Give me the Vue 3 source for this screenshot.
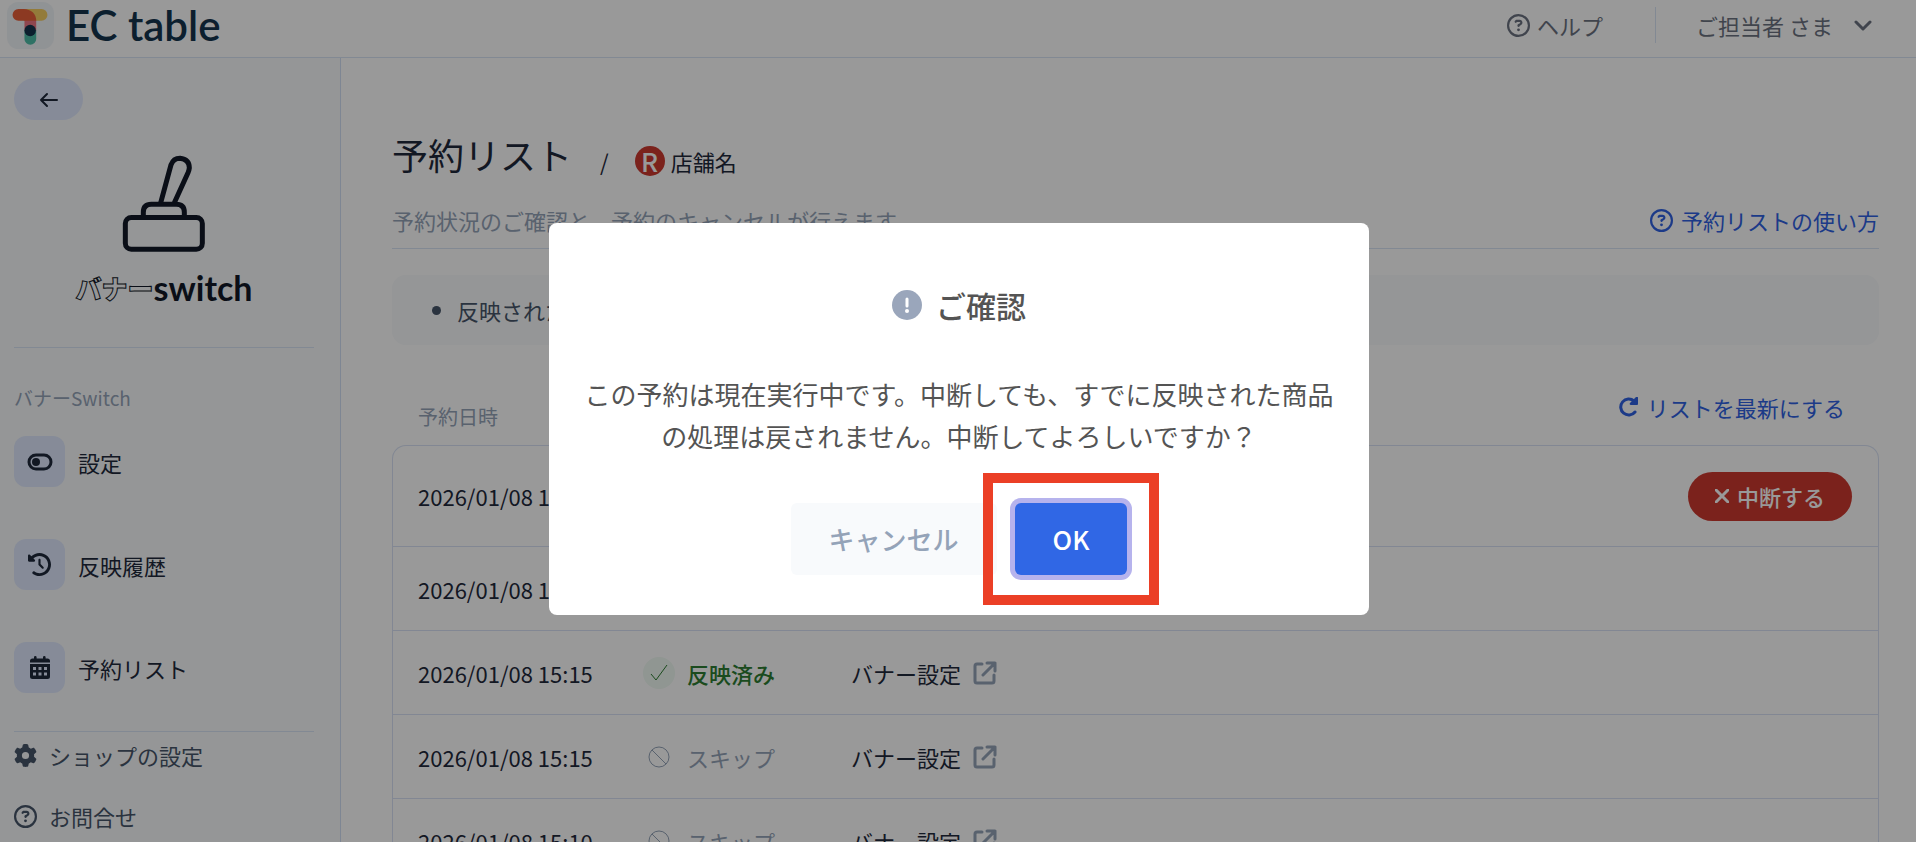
<template>
  <div class="app">
    <header class="header">
      <a href="#" class="brand">
        <svg class="brand-mark" viewBox="0 0 140 140" aria-hidden="true">
          <rect width="140" height="140" rx="34" fill="#f1f5f9" />
          <path d="M50 21H103a17.500 17.500 0 0 1 0 35H50z" fill="#f5cd62" />
          <path d="M52 52H87V86H52z" fill="#ee7584" />
          <path d="M52 84H87V110a17.500 17.500 0 0 1-35 0z" fill="#4fbfa8" />
          <path d="M34 21H50C72 21 87 36 87 56H34a17.500 17.500 0 0 1 0-35z" fill="#ea5f3a" />
          <circle cx="69" cy="85" r="17" fill="#14344d" />
        </svg>
        <span class="brand-name">EC table</span>
      </a>
      <div class="header-menu">
        <a href="#" class="help">
          <svg class="icon" viewBox="0 0 512 512" aria-hidden="true"><path :d="icons.question" /></svg>
          <span>ヘルプ</span>
        </a>
        <button type="button" class="account">
          <span>ご担当者 さま</span>
          <svg class="chevron" viewBox="0 0 18 18" aria-hidden="true"><path d="M2 6l7 7 7-7" /></svg>
        </button>
      </div>
    </header>

    <div class="layout">
      <aside class="sidebar">
        <button type="button" class="back" aria-label="戻る">
          <svg viewBox="0 0 20 18" aria-hidden="true"><path d="M18 10H2M8 4L2 10l6 6" /></svg>
        </button>

        <div class="product">
          <svg class="stamp" viewBox="366 462 252 296" aria-hidden="true">
            <rect x="376" y="652" width="231" height="95" rx="18" />
            <path d="M430 650V636Q430 612 454 612H529Q553 612 553 636V650" />
            <path d="M482 608L513 494Q520 474 540 474Q568 477 568 503Q567 511 564 518L523 608" />
          </svg>
          <div class="product-name"><span class="outlined">バナー</span><span>switch</span></div>
        </div>

        <nav class="menu">
          <p class="menu-title">バナーSwitch</p>
          <a v-for="item in menu" :key="item.label" href="#" class="menu-item">
            <span class="menu-icon">
              <svg v-if="item.icon === 'toggle'" width="26" height="18" viewBox="0 0 26 18" aria-hidden="true">
                <rect x="2" y="2" width="22" height="14" rx="7" fill="none" stroke="currentColor" stroke-width="3" />
                <circle cx="9" cy="9" r="4" />
              </svg>
              <svg v-else-if="item.icon === 'history'" width="23" height="23" viewBox="0 0 512 512" aria-hidden="true">
                <path :d="icons.history" />
              </svg>
              <svg v-else width="20" height="23" viewBox="0 0 20 23" aria-hidden="true">
                <path fill-rule="evenodd" d="M0 6V5Q0 2.500 2.500 2.500H4V1.300a1.300 1.300 0 0 1 2.600 0V2.500H13V1.300a1.300 1.300 0 0 1 2.600 0V2.500H17.500Q20 2.500 20 5V6.500H0zM0 8H20V20.500Q20 23 17.500 23H2.500Q0 23 0 20.500zM3 11v3h3v-3zM8.500 11v3h3v-3zM14 11v3h3v-3zM3 16.500v3h3v-3zM8.500 16.500v3h3v-3zM14 16.500v3h3v-3z" />
              </svg>
            </span>
            <span>{{ item.label }}</span>
          </a>
        </nav>

        <nav class="submenu">
          <a href="#">
            <svg class="icon" viewBox="0 0 512 512" aria-hidden="true"><path :d="icons.gear" /></svg>
            <span>ショップの設定</span>
          </a>
          <a href="#">
            <svg class="icon" viewBox="0 0 512 512" aria-hidden="true"><path :d="icons.question" /></svg>
            <span>お問合せ</span>
          </a>
        </nav>
      </aside>

      <main class="main">
        <div class="page-title">
          <h1>予約リスト</h1>
          <span class="slash">/</span>
          <span class="shop"><span class="shop-mark">R</span>店舗名</span>
        </div>
        <div class="lead">
          <p>予約状況のご確認と、予約のキャンセルが行えます。</p>
          <a href="#">
            <svg class="icon" viewBox="0 0 512 512" aria-hidden="true"><path :d="icons.question" /></svg>
            <span>予約リストの使い方</span>
          </a>
        </div>
        <ul class="notice">
          <li>反映された</li>
        </ul>

        <table class="list">
          <thead>
            <tr>
              <th class="col-date">予約日時</th>
              <th class="col-status"></th>
              <th class="col-target"></th>
              <th class="col-action">
                <button type="button" class="refresh">
                  <svg width="20" height="20" viewBox="0 0 20 20" aria-hidden="true">
                    <path d="M16 15A8 8 0 1 1 15 4" fill="none" stroke="currentColor" stroke-width="3" stroke-linecap="round" />
                    <path d="M19 1V7Q19 8 18 8H12Q10 8 11 6L17 0Q19-1 19 1z" />
                  </svg>
                  <span>リストを最新にする</span>
                </button>
              </th>
            </tr>
          </thead>
          <tbody>
            <tr v-for="row in rows" :key="row.id">
              <td>{{ row.date }}</td>
              <td>
                <span v-if="row.status" class="status" :class="row.status">
                  <span class="status-icon">
                    <svg v-if="row.status === 'done'" viewBox="0 0 20 20" aria-hidden="true"><path d="M2 11l5 6L18 2" /></svg>
                    <svg v-else viewBox="0 0 22 22" aria-hidden="true"><circle cx="11" cy="11" r="10" /><path d="M4 4l14 14" /></svg>
                  </span>
                  <span>{{ row.status === 'done' ? '反映済み' : 'スキップ' }}</span>
                </span>
              </td>
              <td>
                <a v-if="row.target" href="#" class="target">
                  <span>{{ row.target }}</span>
                  <svg viewBox="0 0 24 24" aria-hidden="true">
                    <path d="M9 3H4Q2 3 2 5V20Q2 22 4 22H19Q21 22 21 20V14M14 2H22V10M22 2L10 14" />
                  </svg>
                </a>
              </td>
              <td class="col-action">
                <button v-if="row.running" type="button" class="abort" @click="showModal = true">
                  <svg viewBox="0 0 14 14" aria-hidden="true"><path d="M1 1l12 12M13 1L1 13" /></svg>
                  <span>中断する</span>
                </button>
              </td>
            </tr>
          </tbody>
        </table>
      </main>
    </div>

    <div v-if="showModal" class="modal-overlay" @click="closeModal">
      <div class="modal" role="dialog" aria-labelledby="modal-title" @click.stop>
        <h2 id="modal-title" class="modal-title">
          <svg viewBox="0 0 30 30" aria-hidden="true">
            <circle cx="15" cy="15" r="15" fill="#9aa6bb" />
            <path d="M15 9V16" stroke="#fff" stroke-width="3" stroke-linecap="round" />
            <circle cx="15" cy="21" r="2" fill="#fff" />
          </svg>
          <span>ご確認</span>
        </h2>
        <p class="modal-text">この予約は現在実行中です。中断しても、すでに反映された商品の処理は戻されません。中断してよろしいですか？</p>
        <div class="modal-actions">
          <button type="button" class="btn cancel" @click="closeModal">キャンセル</button>
          <div class="marked">
            <button type="button" class="btn ok" @click="closeModal">OK</button>
          </div>
        </div>
      </div>
    </div>
  </div>
</template>

<script setup>
import { ref } from 'vue'

const showModal = ref(true)

const menu = [
  { label: '設定', icon: 'toggle' },
  { label: '反映履歴', icon: 'history' },
  { label: '予約リスト', icon: 'calendar' }
]

const rows = [
  { id: 1, date: '2026/01/08 15:15', running: true },
  { id: 2, date: '2026/01/08 15:15' },
  { id: 3, date: '2026/01/08 15:15', status: 'done', target: 'バナー設定' },
  { id: 4, date: '2026/01/08 15:15', status: 'skip', target: 'バナー設定' },
  { id: 5, date: '2026/01/08 15:10', status: 'skip', target: 'バナー設定' }
]

const icons = {
  question:
    'M464 256A208 208 0 1 0 48 256a208 208 0 1 0 416 0zM0 256a256 256 0 1 1 512 0A256 256 0 1 1 0 256zm169.8-90.7c7.9-22.3 29.1-37.3 52.8-37.3l58.3 0c34.9 0 63.1 28.3 63.1 63.1c0 22.6-12.1 43.5-31.7 54.8L280 264.4c-.2 13-10.9 23.6-24 23.6c-13.3 0-24-10.7-24-24l0-13.5c0-8.6 4.6-16.5 12.1-20.8l44.3-25.4c4.7-2.7 7.6-7.7 7.6-13.1c0-8.4-6.8-15.1-15.1-15.1l-58.3 0c-3.4 0-6.4 2.1-7.5 5.3l-.4 1.2c-4.4 12.5-18.2 19-30.6 14.6s-19-18.2-14.6-30.6l.4-1.2zM224 352a32 32 0 1 1 64 0 32 32 0 1 1 -64 0z',
  gear:
    'M495.9 166.6c3.2 8.7 .5 18.4-6.4 24.6l-43.3 39.4c1.1 8.3 1.7 16.8 1.7 25.4s-.6 17.1-1.7 25.4l43.3 39.4c6.9 6.2 9.6 15.9 6.4 24.6c-4.4 11.9-9.7 23.3-15.8 34.3l-4.7 8.1c-6.6 11-14 21.4-22.1 31.2c-5.9 7.2-15.7 9.6-24.5 6.8l-55.7-17.7c-13.4 10.3-28.2 18.9-44 25.4l-12.5 57.1c-2 9.1-9 16.3-18.2 17.8c-13.8 2.3-28 3.5-42.5 3.5s-28.7-1.2-42.5-3.5c-9.2-1.5-16.2-8.7-18.2-17.8l-12.5-57.1c-15.8-6.5-30.6-15.1-44-25.4L83.1 425.9c-8.8 2.8-18.6 .3-24.5-6.8c-8.1-9.8-15.5-20.2-22.1-31.2l-4.7-8.1c-6.1-11-11.4-22.4-15.8-34.3c-3.2-8.7-.5-18.4 6.4-24.6l43.3-39.4C64.6 273.1 64 264.6 64 256s.6-17.1 1.7-25.4L22.4 191.2c-6.9-6.2-9.6-15.9-6.4-24.6c4.4-11.9 9.7-23.3 15.8-34.3l4.7-8.1c6.6-11 14-21.4 22.1-31.2c5.9-7.2 15.7-9.6 24.5-6.8l55.7 17.7c13.4-10.3 28.2-18.9 44-25.4l12.5-57.1c2-9.1 9-16.3 18.2-17.8C227.3 1.2 241.5 0 256 0s28.7 1.2 42.5 3.5c9.2 1.5 16.2 8.7 18.2 17.8l12.5 57.1c15.8 6.5 30.6 15.1 44 25.4l55.7-17.7c8.8-2.8 18.6-.3 24.5 6.8c8.1 9.8 15.5 20.2 22.1 31.2l4.7 8.1c6.1 11 11.4 22.4 15.8 34.3zM256 336a80 80 0 1 0 0-160 80 80 0 1 0 0 160z',
  history:
    'M75 75L41 41C25.9 25.9 0 36.6 0 57.9V168c0 13.3 10.7 24 24 24H134.1c21.4 0 32.1-25.9 17-41l-30.8-30.8C155 85.5 203 64 256 64c106 0 192 86 192 192s-86 192-192 192c-40.8 0-78.6-12.7-109.7-34.4c-14.5-10.1-34.4-6.6-44.6 7.9s-6.6 34.4 7.9 44.6C151.2 495 201.7 512 256 512c141.4 0 256-114.6 256-256S397.4 0 256 0C185.3 0 121.3 28.7 75 75zm181 53c-13.3 0-24 10.7-24 24V256c0 6.4 2.5 12.5 7 17l72 72c9.4 9.4 24.6 9.4 33.9 0s9.4-24.6 0-33.9l-65-65V152c0-13.3-10.7-24-24-24z'
}

function closeModal() {
  showModal.value = false
}
</script>

<style>
body {
  margin: 0;
  background: #fff;
}
</style>

<style scoped>
.app {
  display: flex;
  flex-direction: column;
  height: 100vh;
  overflow: hidden;
  font-family: "Noto Sans CJK JP", sans-serif;
  font-size: 22px;
  line-height: 32px;
  color: #1e293b;
}

a {
  color: inherit;
  text-decoration: none;
}

button {
  font: inherit;
  color: inherit;
  border: none;
  background: none;
  padding: 0;
  cursor: pointer;
}

h1,
h2,
p,
ul {
  margin: 0;
  padding: 0;
}

svg {
  fill: currentColor;
  flex-shrink: 0;
}

.icon {
  width: 23px;
  height: 23px;
}

.header {
  display: flex;
  justify-content: space-between;
  align-items: flex-start;
  box-sizing: border-box;
  height: 58px;
  flex-shrink: 0;
  padding: 2px 44px 0 7px;
  border-bottom: 1px solid #d9e4f5;
}

.brand {
  display: flex;
  align-items: center;
  gap: 12px;
}

.brand-mark {
  width: 47px;
  height: 47px;
}

.brand-name {
  font-family: Lato, sans-serif;
  font-size: 42px;
  line-height: 47px;
  font-weight: 600;
  color: #14344d;
}

.header-menu {
  display: flex;
  align-items: center;
  padding-top: 5px;
  color: #6b7280;
}

.help {
  display: flex;
  align-items: center;
  gap: 7px;
  padding-right: 52px;
}

.account {
  display: flex;
  align-items: center;
  gap: 21px;
  height: 36px;
  padding-left: 40px;
  border-left: 1px solid #d9e4f5;
}

.chevron {
  width: 18px;
  height: 18px;
  fill: none;
  stroke: currentColor;
  stroke-width: 3;
  stroke-linecap: round;
  stroke-linejoin: round;
}

.layout {
  display: flex;
  flex: 1;
  min-height: 0;
}

.sidebar {
  box-sizing: border-box;
  width: 341px;
  flex-shrink: 0;
  padding: 20px 26px 0 14px;
  background: #f8fafc;
  border-right: 1px solid #d2e0f5;
}

.back {
  display: flex;
  align-items: center;
  justify-content: center;
  width: 69px;
  height: 42px;
  border-radius: 21px;
  background: #dfe8fd;
}

.back svg {
  width: 20px;
  height: 18px;
  fill: none;
  stroke: currentColor;
  stroke-width: 2;
  stroke-linecap: round;
  stroke-linejoin: round;
}

.product {
  display: flex;
  flex-direction: column;
  align-items: center;
  gap: 12px;
  padding: 34px 0 37px;
  border-bottom: 1px solid #d9e4f5;
  color: #111827;
}

.stamp {
  width: 84px;
  height: 99px;
  fill: none;
  stroke: currentColor;
  stroke-width: 15;
}

.product-name {
  display: flex;
  align-items: center;
  font-family: Lato, sans-serif;
  font-size: 34px;
  line-height: 45px;
  font-weight: 700;
}

.outlined {
  font-family: "Noto Sans CJK JP", sans-serif;
  font-size: 26px;
  font-weight: 900;
  color: transparent;
  -webkit-text-stroke: 1px #111827;
}

.menu {
  display: flex;
  flex-direction: column;
  gap: 52px;
  padding: 34px 0 38px;
  border-bottom: 1px solid #d9e4f5;
}

.menu-title {
  font-size: 19px;
  color: #94a3b8;
  margin-bottom: -30px;
}

.menu-item {
  display: flex;
  align-items: center;
  gap: 13px;
}

.menu-icon {
  display: flex;
  align-items: center;
  justify-content: center;
  width: 51px;
  height: 51px;
  border-radius: 12px;
  background: #dfe8fd;
}

.submenu {
  display: flex;
  flex-direction: column;
  gap: 29px;
  padding-top: 7px;
  color: #475569;
}

.submenu a {
  display: flex;
  align-items: center;
  gap: 12px;
}

.main {
  flex: 1;
  min-width: 0;
  padding: 68px 37px 0 51px;
}

.page-title {
  display: flex;
  align-items: center;
}

h1 {
  font-size: 36px;
  line-height: 56px;
  font-weight: 400;
}

.slash {
  padding: 14px 26px 0 28px;
}

.shop {
  display: flex;
  align-items: center;
  gap: 6px;
  padding-top: 14px;
}

.shop-mark {
  width: 30px;
  height: 30px;
  border-radius: 50%;
  background: #cd3930;
  color: #fff;
  font-size: 26px;
  font-weight: 500;
  line-height: 29px;
  text-align: center;
}

.lead {
  display: flex;
  justify-content: space-between;
  padding: 22px 0 12px;
  border-bottom: 1px solid #d9e4f5;
  color: #94a3b8;
}

.lead a {
  display: flex;
  align-items: center;
  gap: 8px;
  color: #2f62e3;
}

.notice {
  margin-top: 26px;
  padding: 19px 40px;
  border-radius: 14px;
  background: #f8fafc;
  list-style: none;
  color: #475569;
}

.notice li {
  display: flex;
  align-items: center;
  gap: 16px;
}

.notice li::before {
  content: "";
  width: 9px;
  height: 9px;
  border-radius: 50%;
  background: #475569;
}

.list {
  width: 100%;
  table-layout: fixed;
  border-collapse: separate;
  border-spacing: 0;
}

th {
  height: 100px;
  box-sizing: border-box;
  padding: 0 0 12px;
  vertical-align: bottom;
  text-align: left;
  font-size: 20px;
  font-weight: 400;
  color: #94a3b8;
}

th.col-date {
  width: 251px;
  box-sizing: border-box;
  padding-left: 26px;
}

.col-status {
  width: 208px;
}

.col-target {
  width: 40%;
}

.col-action {
  text-align: right;
}

th.col-action {
  padding: 0 34px 20px 0;
}

td {
  box-sizing: border-box;
  height: 84px;
  padding: 0;
  border-top: 1px solid #d9e2f5;
}

tbody tr:first-child td {
  height: 101px;
}

td:first-child {
  padding-left: 25px;
  border-left: 1px solid #d9e2f5;
}

td:last-child {
  padding-right: 26px;
  border-right: 1px solid #d9e2f5;
}

tbody tr:first-child td:first-child {
  border-top-left-radius: 14px;
}

tbody tr:first-child td:last-child {
  border-top-right-radius: 14px;
}

.refresh {
  display: inline-flex;
  align-items: center;
  gap: 8px;
  font-size: 22px;
  color: #2f62e3;
}

.status {
  display: flex;
  align-items: center;
  gap: 12px;
}

.status-icon {
  display: flex;
  align-items: center;
  justify-content: center;
  width: 32px;
  height: 32px;
  border-radius: 50%;
}

.status-icon svg {
  width: 22px;
  height: 22px;
  fill: none;
  stroke: currentColor;
  stroke-width: 1;
}

.done {
  color: #2e7d32;
  font-weight: 500;
}

.done .status-icon {
  background: #f0faf3;
}

.done .status-icon svg {
  width: 20px;
  height: 20px;
}

.skip {
  color: #94a3b8;
}

.target {
  display: flex;
  align-items: center;
  gap: 12px;
}

.target svg {
  width: 24px;
  height: 24px;
  fill: none;
  stroke: #94a3b8;
  stroke-width: 3;
  stroke-linecap: round;
  stroke-linejoin: round;
}

.abort {
  display: inline-flex;
  align-items: center;
  gap: 8px;
  height: 49px;
  padding: 0 27px;
  border-radius: 25px;
  background: #cd3930;
  color: #fff;
  font-weight: 500;
  vertical-align: middle;
}

.abort svg {
  width: 14px;
  height: 14px;
  stroke: currentColor;
  stroke-width: 3;
  stroke-linecap: round;
}

.modal-overlay {
  position: fixed;
  inset: 0;
  display: flex;
  align-items: center;
  justify-content: center;
  padding: 0 0 4px 2px;
  background: rgba(0, 0, 0, 0.4);
}

.modal {
  box-sizing: border-box;
  width: 820px;
  max-width: 100%;
  padding: 60px 28px 40px;
  border-radius: 8px;
  background: #fff;
  color: #545454;
  text-align: center;
}

.modal-title {
  display: flex;
  align-items: center;
  justify-content: center;
  gap: 14px;
  font-size: 30px;
  line-height: 44px;
  font-weight: 500;
}

.modal-title svg {
  width: 30px;
  height: 30px;
}

.modal-text {
  margin: 46px 0;
  font-size: 26px;
  line-height: 42px;
  font-weight: 400;
}

.modal-actions {
  display: flex;
  justify-content: center;
  gap: 18px;
}

.btn {
  height: 72px;
  padding: 0 38px;
  border-radius: 6px;
  font-size: 26px;
  font-weight: 500;
}

.cancel {
  background: #f8fafc;
  color: #94a3b8;
}

.marked {
  position: relative;
}

/* red frame around the confirm button */
.marked::after {
  content: "";
  position: absolute;
  inset: -30px -32px;
  border: 10px solid #eb3f26;
  pointer-events: none;
}

.ok {
  background: #3067e5;
  color: #fff;
  box-shadow: 0 0 0 5px #b6b3ed;
}
</style>
